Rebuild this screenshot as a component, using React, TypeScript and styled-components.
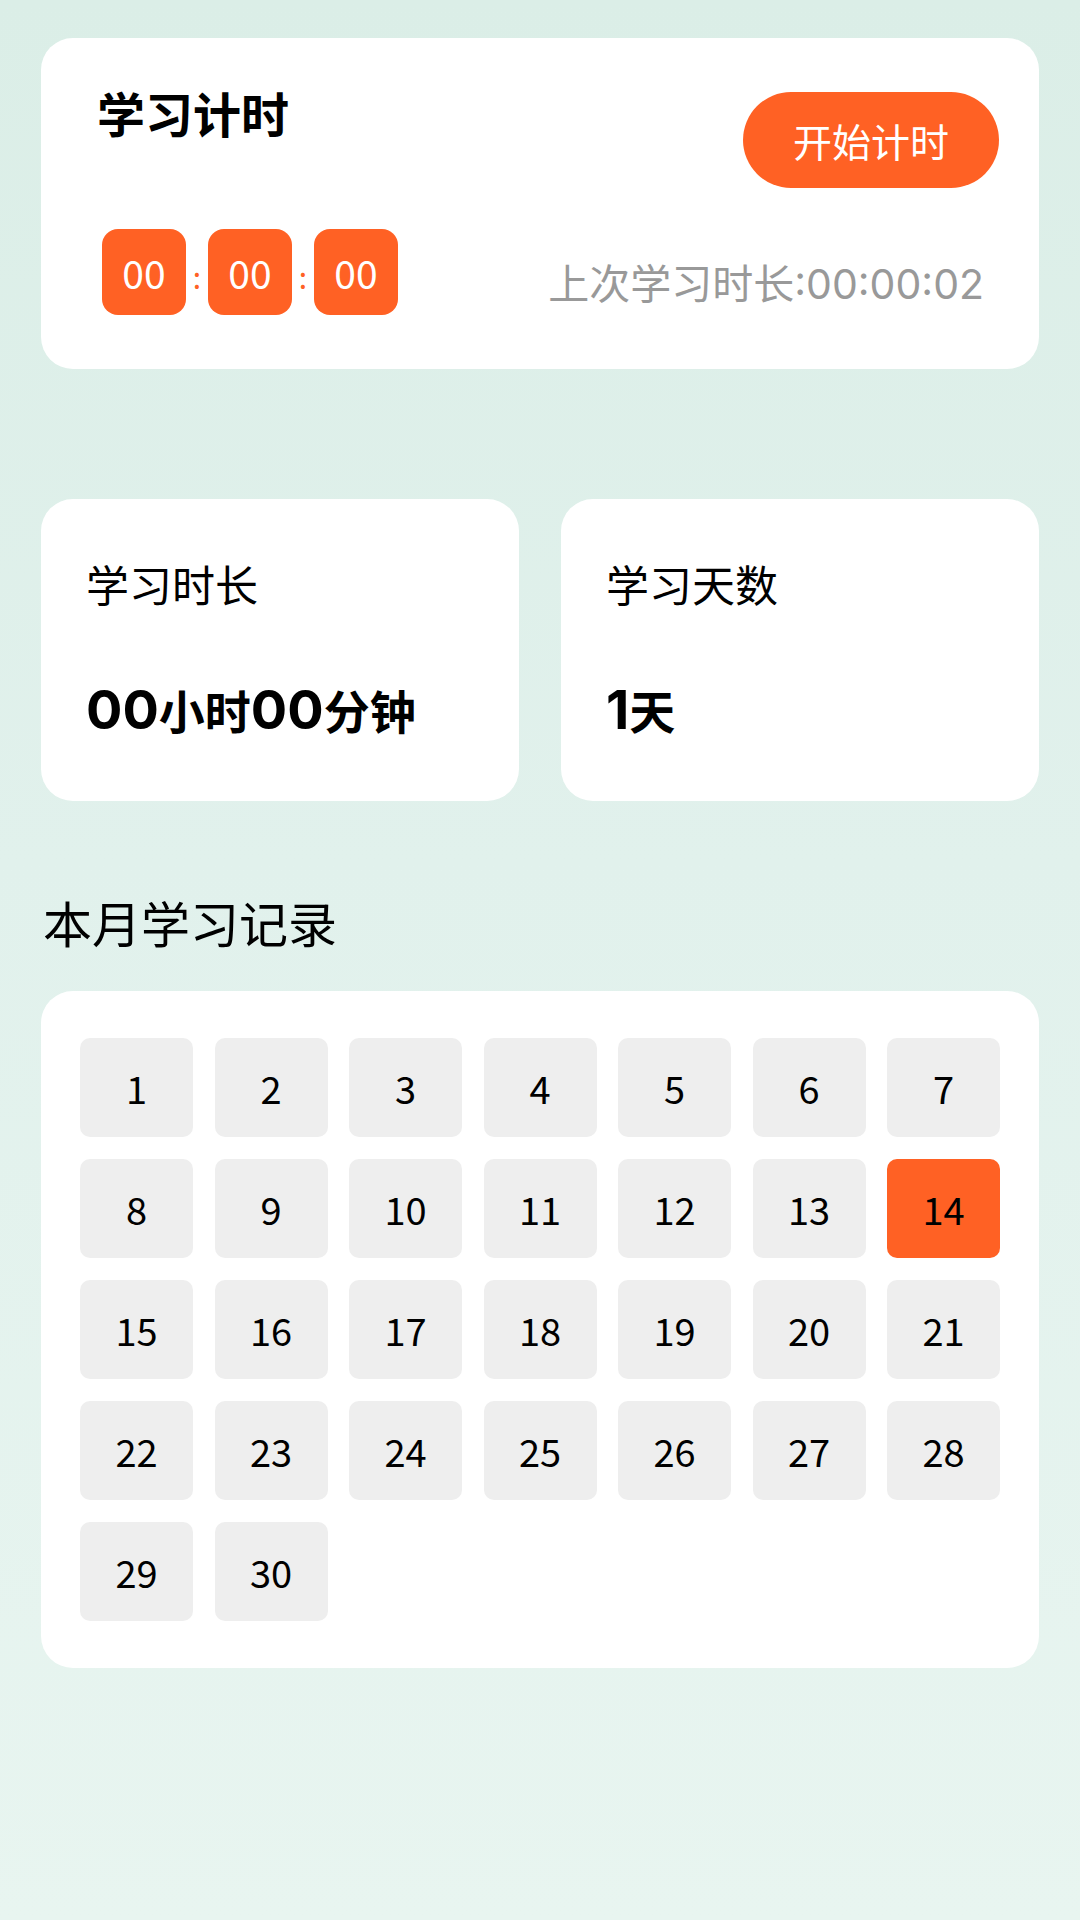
import styled, { createGlobalStyle } from "styled-components";

const ORANGE = "#ff6124";

const GlobalStyle = createGlobalStyle`
  html, body {
    margin: 0;
    padding: 0;
  }
  body {
    font-family: "Noto Sans CJK SC", "Noto Sans", sans-serif;
    color: #000;
  }
  * {
    box-sizing: border-box;
  }
`;

const Page = styled.div`
  min-height: 1920px;
  padding: 38px 41px 0;
  background: linear-gradient(180deg, #dbeee7 0%, #e1f1ec 45%, #e8f5f0 100%);
`;

const Card = styled.div`
  background: #fff;
  border-radius: 32px;
`;

const TimerCard = styled(Card)`
  padding: 54px 40px 54px 56px;
`;

const Row = styled.div`
  display: flex;
  justify-content: space-between;
  align-items: flex-start;
`;

const TimerTitle = styled.h1`
  margin: -5px 0 0;
  font-size: 48px;
  line-height: 50px;
  font-weight: 700;
`;

const StartButton = styled.button`
  width: 256px;
  height: 96px;
  border: none;
  border-radius: 48px;
  background: ${ORANGE};
  color: #fff;
  font-family: inherit;
  font-size: 39px;
  font-weight: 400;
  padding: 0;
`;

const BottomRow = styled(Row)`
  margin-top: 41px;
  align-items: center;
`;

const Clock = styled.div`
  display: flex;
  align-items: center;
  margin-left: 5px;
`;

const Digit = styled.div`
  width: 84px;
  height: 86px;
  border-radius: 16px;
  background: ${ORANGE};
  color: #fff;
  font-size: 39px;
  display: flex;
  align-items: center;
  justify-content: center;
`;

const Colon = styled.span`
  width: 22px;
  text-align: center;
  color: ${ORANGE};
  font-size: 30px;
  font-weight: 400;
  padding-top: 8px;
`;

const LastTime = styled.span`
  color: #999;
  font-family: "Inter", "Noto Sans CJK SC", sans-serif;
  font-size: 41px;
  padding-top: 18px;
  margin-right: 15px;
`;

const StatsRow = styled.div`
  display: grid;
  grid-template-columns: 1fr 1fr;
  gap: 42px;
  margin-top: 130px;
`;

const StatCard = styled(Card)`
  height: 302px;
  padding: 60px 45px 0;
`;

const StatLabel = styled.div`
  font-size: 43px;
  line-height: 48px;
`;

const StatValue = styled.div`
  margin-top: 72px;
  font-size: 46px;
  line-height: 60px;
  font-weight: 700;
  display: flex;
  align-items: baseline;
`;

const Num = styled.span`
  font-family: "Inter", "Noto Sans CJK SC", sans-serif;
  font-size: 54px;
  font-weight: 700;
`;

const SectionTitle = styled.h2`
  margin: 92px 0 40px 2px;
  font-size: 49px;
  line-height: 58px;
  font-weight: 400;
`;

const CalendarCard = styled(Card)`
  padding: 47px 39px;
`;

const Grid = styled.div`
  display: grid;
  grid-template-columns: repeat(7, 1fr);
  column-gap: 21.5px;
  row-gap: 22px;
`;

const Day = styled.div<{ $active?: boolean }>`
  height: 99px;
  border-radius: 10px;
  background: ${(p) => (p.$active ? ORANGE : "#eeeeee")};
  color: #000;
  font-size: 38px;
  display: flex;
  align-items: center;
  justify-content: center;
`;

const days = Array.from({ length: 30 }, (_, i) => i + 1);

export default function App() {
  return (
    <>
      <GlobalStyle />
      <Page>
        <TimerCard>
          <Row>
            <TimerTitle>学习计时</TimerTitle>
            <StartButton>开始计时</StartButton>
          </Row>
          <BottomRow>
            <Clock>
              <Digit>00</Digit>
              <Colon>:</Colon>
              <Digit>00</Digit>
              <Colon>:</Colon>
              <Digit>00</Digit>
            </Clock>
            <LastTime>上次学习时长:00:00:02</LastTime>
          </BottomRow>
        </TimerCard>

        <StatsRow>
          <StatCard>
            <StatLabel>学习时长</StatLabel>
            <StatValue>
              <Num>00</Num>小时<Num>00</Num>分钟
            </StatValue>
          </StatCard>
          <StatCard>
            <StatLabel>学习天数</StatLabel>
            <StatValue>
              <Num>1</Num>天
            </StatValue>
          </StatCard>
        </StatsRow>

        <SectionTitle>本月学习记录</SectionTitle>
        <CalendarCard>
          <Grid>
            {days.map((d) => (
              <Day key={d} $active={d === 14}>
                {d}
              </Day>
            ))}
          </Grid>
        </CalendarCard>
      </Page>
    </>
  );
}
